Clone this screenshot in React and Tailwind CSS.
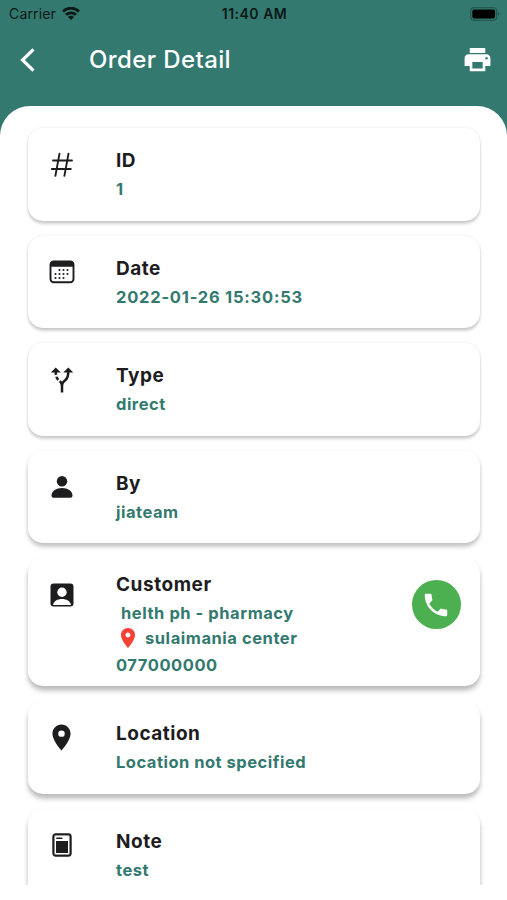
import { MdAltRoute, MdLocationOn, MdPhone, MdPrint } from 'react-icons/md'

const LOW_SHADOW = 'shadow-[0_3px_3px_rgba(0,0,0,0.18),0_0_3px_rgba(0,0,0,0.10)]'
const MID_SHADOW = 'shadow-[0_4px_4px_rgba(0,0,0,0.20),0_1px_4px_rgba(0,0,0,0.08)]'
const HIGH_SHADOW = 'shadow-[0_5px_5px_rgba(0,0,0,0.22),0_2px_4px_rgba(0,0,0,0.08)]'

export default function App() {
  return (
    <div className="flex h-[900px] w-[507px] flex-col overflow-hidden bg-white font-['Inter','Liberation_Sans',sans-serif] text-[#1d1d1f]">
      <div className="flex h-[885px] flex-col overflow-hidden bg-[#33796f]">
        <StatusBar />
        <header className="flex h-[79px] shrink-0 items-center pr-[14px] pb-[14px] pl-5 text-white">
          <BackIcon className="h-6 w-4" />
          <h1 className="ml-[53px] flex-1 text-[24px] leading-7 font-medium tracking-[0.4px]">Order Detail</h1>
          <MdPrint className="h-[31px] w-[31px]" />
        </header>
        <main className="flex min-h-0 flex-1 flex-col gap-[15px] overflow-hidden rounded-t-[30px] bg-white pt-[22px] pr-[27px] pl-7">
          <Card title="ID" icon={<HashIcon />} shadow={LOW_SHADOW}>1</Card>
          <Card title="Date" icon={<CalendarIcon />} shadow={LOW_SHADOW}>
            <time className="tracking-[0.77px]">2022-01-26 15:30:53</time>
          </Card>
          <Card title="Type" icon={<MdAltRoute className="h-[30px] w-[30px]" />} shadow={LOW_SHADOW}>direct</Card>
          <Card title="By" icon={<PersonIcon />} shadow={MID_SHADOW}>jiateam</Card>
          <CustomerCard />
          <Card title="Location" icon={<MdLocationOn className="h-[31px] w-[31px]" />} shadow={HIGH_SHADOW}>
            Location not specified
          </Card>
          <Card title="Note" icon={<NoteIcon />} shadow={HIGH_SHADOW}>test</Card>
        </main>
      </div>
    </div>
  )
}

function StatusBar() {
  return (
    <div className="grid h-[27px] shrink-0 grid-cols-3 items-center pr-[7px] pl-[9px] text-[14px] text-[#0a1816]">
      <div className="flex items-center gap-[6px]">
        <span className="tracking-[0.15px]">Carrier</span>
        <WifiIcon />
      </div>
      <span className="text-center font-semibold tracking-[0.5px]">11:40 AM</span>
      <div className="flex justify-end">
        <BatteryIcon />
      </div>
    </div>
  )
}

function Card({ title, icon, shadow, children }) {
  return (
    <section className={`flex h-[92.5px] shrink-0 rounded-[15px] bg-white ${shadow}`}>
      <div className="flex h-[73px] w-[67px] shrink-0 items-center justify-center">{icon}</div>
      <div className="pt-[21.2px] pl-[21px]">
        <h2 className="text-[19px] leading-6 font-bold tracking-[0.5px]">{title}</h2>
        <p className="mt-[5px] text-[16.5px] leading-[22px] font-bold tracking-[0.5px] text-[#33796f]">{children}</p>
      </div>
    </section>
  )
}

function CustomerCard() {
  return (
    <section className={`flex h-[128px] shrink-0 rounded-[15px] bg-white ${HIGH_SHADOW}`}>
      <div className="flex h-[73px] w-[67px] shrink-0 items-center justify-center">
        <AccountIcon />
      </div>
      <div className="flex-1 pt-[14.5px] pl-[21px] text-[16.5px] leading-[22px] font-bold tracking-[0.55px] text-[#33796f]">
        <h2 className="text-[19px] leading-6 tracking-[0.55px] text-[#1d1d1f]">Customer</h2>
        <p className="mt-[5px] pl-[5px]">helth ph - pharmacy</p>
        <p className="mt-[3px] flex h-[23px] items-center gap-[5px]">
          <MdLocationOn className="h-6 w-6 text-[#f44336]" />
          sulaimania center
        </p>
        <p className="mt-[4px]">077000000</p>
      </div>
      <button
        type="button"
        aria-label="Call"
        className="mt-[22px] mr-[19.5px] flex h-[49px] w-[49px] items-center justify-center rounded-full bg-[#4caf50] text-white"
      >
        <MdPhone className="h-[30px] w-[30px]" />
      </button>
    </section>
  )
}

function BackIcon({ className }) {
  return (
    <svg className={className} viewBox="0 0 16 24" fill="none" stroke="currentColor" strokeWidth="3.200">
      <path d="M13.500 1.300 2.500 12l11 10.700" />
    </svg>
  )
}

function WifiIcon() {
  return (
    <svg className="h-[14px] w-[18px]" viewBox="0 0 18 14" fill="none" stroke="currentColor" strokeWidth="2.800">
      <path d="M1 4.400a11.500 11.500 0 0 1 16 0M4 7.800a7.200 7.200 0 0 1 10 0" />
      <path d="M6 10.100a4.400 4.400 0 0 1 6 0l-3 3z" fill="currentColor" stroke="none" />
    </svg>
  )
}

function BatteryIcon() {
  return (
    <svg className="h-[14px] w-[30px]" viewBox="0 0 30 14">
      <rect x="0.700" y="0.700" width="26" height="12.600" rx="3.500" fill="none" stroke="#23594f" strokeWidth="1.200" />
      <rect x="2.300" y="2.400" width="22.800" height="9.200" rx="2" fill="#000" />
      <path d="M28 5c1.500.6 1.500 3.400 0 4z" fill="#23594f" />
    </svg>
  )
}

function HashIcon() {
  return (
    <svg className="h-7 w-7" viewBox="0 0 28 28" fill="none" stroke="currentColor" strokeWidth="1.900" strokeLinecap="round">
      <path d="M11.500 2.700 7.400 24.800M20.500 2.700l-4.100 22.100M5 9.500h19M3.800 18h19" />
    </svg>
  )
}

function CalendarIcon() {
  return (
    <svg className="h-6 w-[26px]" viewBox="0 0 26 24">
      <rect x="1.500" y="1.400" width="23" height="20.800" rx="3.200" fill="none" stroke="currentColor" strokeWidth="1.900" />
      <path d="M1 6.700V4.500Q1 1 4.500 1h17Q25 1 25 4.500v2.200z" fill="currentColor" />
      <path
        d="M10.500 10h0M14.500 10h0M18.500 10h0M6.500 14h0M10.500 14h0M14.500 14h0M18.500 14h0M6.500 18h0M10.500 18h0M14.500 18h0"
        stroke="currentColor"
        strokeWidth="2.100"
        strokeLinecap="round"
      />
    </svg>
  )
}

function PersonIcon() {
  return (
    <svg className="h-6 w-6" viewBox="0 0 24 24" fill="currentColor">
      <circle cx="12" cy="6.300" r="5.200" />
      <path d="M1.500 20.800c0-4.700 4.800-7.700 10.500-7.700s10.500 3 10.500 7.700q0 2-2 2h-17q-2 0-2-2z" />
    </svg>
  )
}

function AccountIcon() {
  return (
    <svg className="h-6 w-6" viewBox="0 0 24 24">
      <rect x="0.500" y="0.500" width="23" height="23" rx="3.200" fill="currentColor" />
      <circle cx="12" cy="9.200" r="4.700" fill="#fff" />
      <path d="M3 22c.8-4 4.500-6 9-6s8.200 2 9 6z" fill="#fff" />
    </svg>
  )
}

function NoteIcon() {
  return (
    <svg className="h-6 w-5" viewBox="0 0 20 24">
      <rect x="1.200" y="1.200" width="17.600" height="21.600" rx="2.500" fill="#999" stroke="currentColor" strokeWidth="1.800" />
      <rect x="3" y="3" width="14" height="18" rx="1" fill="#fff" />
      <rect x="4" y="8" width="12" height="12" fill="currentColor" />
      <path d="M4.800 5.300h5" stroke="currentColor" strokeWidth="1.500" strokeLinecap="round" />
    </svg>
  )
}
